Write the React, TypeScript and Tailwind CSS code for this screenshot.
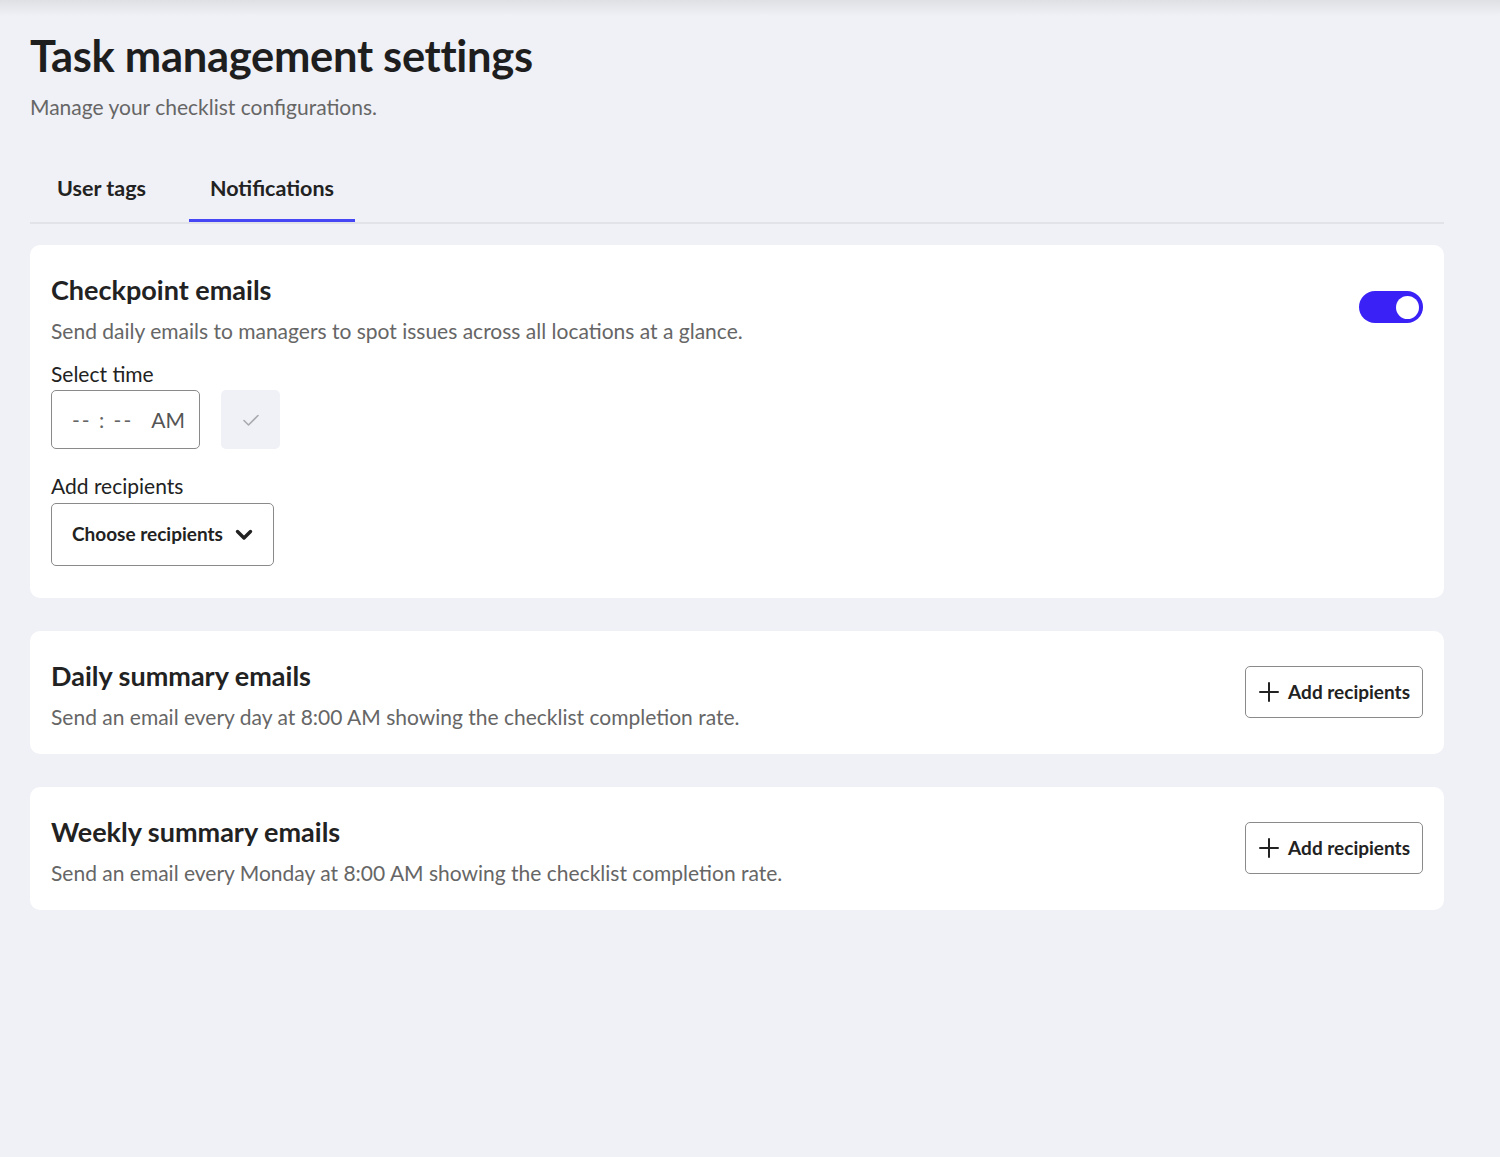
import React, { useState } from 'react';

const font = { fontFamily: 'Lato, "Open Sans", sans-serif' };

const PlusIcon = () => (
  <svg width="22" height="22" viewBox="0 0 22 22" fill="none" stroke="#222" strokeWidth="2" strokeLinecap="round">
    <path d="M11 2v18M2 11h18" />
  </svg>
);

const AddRecipientsButton = () => (
  <button className="flex items-center gap-[8px] h-[52px] pl-[12px] pr-[12px] border border-[#8a8a8a] rounded-[5px] bg-white text-[19px] font-bold text-[#222]">
    <PlusIcon />
    <span>Add recipients</span>
  </button>
);

const SummaryCard: React.FC<{ title: string; text: string }> = ({ title, text }) => (
  <div className="bg-white rounded-[10px] px-[21px] pt-[29px] pb-[24px] flex items-start justify-between">
    <div>
      <h2 className="text-[27px] font-bold text-[#222] leading-[32px]">{title}</h2>
      <p className="text-[21px] text-[#666] mt-[12px] leading-[26px]">{text}</p>
    </div>
    <div className="pt-[6px]">
      <AddRecipientsButton />
    </div>
  </div>
);

export default function App() {
  const [on, setOn] = useState(true);
  return (
    <div style={font} className="min-h-[1157px] bg-[#f0f1f6] px-[30px] pt-[28px] bg-[linear-gradient(to_bottom,#dfe0e4_0px,#f0f1f6_16px)]">
      <div className="w-[1414px]">
        <h1 className="text-[43.5px] font-bold text-[#1e1e1e] leading-[54px] tracking-[-0.3px]">Task management settings</h1>
        <p className="text-[21px] text-[#666] mt-[12px] leading-[26px]">Manage your checklist configurations.</p>

        <div className="mt-[50px] flex border-b-2 border-[#e2e3e8]">
          <button className="pl-[27px] w-[159px] text-left h-[52px] pb-[16px] text-[21.5px] font-bold text-[#222]">User tags</button>
          <button className="w-[166px] h-[52px] pb-[13px] text-[21.5px] font-bold text-[#222] border-b-[3px] border-[#4646f5] -mb-[2px]">Notifications</button>
        </div>

        <div className="mt-[21px] flex flex-col gap-[33px]">
          <div className="bg-white rounded-[10px] px-[21px] pt-[29px] pb-[32px] flex items-start justify-between">
            <div>
              <h2 className="text-[27px] font-bold text-[#222] leading-[32px]">Checkpoint emails</h2>
              <p className="text-[21px] text-[#666] mt-[12px] leading-[26px]">Send daily emails to managers to spot issues across all locations at a glance.</p>
              <p className="text-[21px] text-[#222] mt-[17px] leading-[26px]">Select time</p>
              <div className="flex items-center gap-[21px] mt-[3px]">
                <div className="w-[149px] h-[59px] border border-[#8a8a8a] rounded-[5px] flex items-center pl-[20px] text-[21px] text-[#666]">
                  <span className="tracking-[2px]">-- : --</span>
                  <span className="ml-[18px] text-[#555]">AM</span>
                </div>
                <div className="w-[59px] h-[59px] rounded-[5px] bg-[#f0f1f6] flex items-center justify-center">
                  <svg width="20" height="20" viewBox="0 0 20 20" fill="none" stroke="#a9aab0" strokeWidth="1.6" strokeLinecap="round" strokeLinejoin="round">
                    <path d="M3 10.5l4.5 4.5L17 5.5" />
                  </svg>
                </div>
              </div>
              <p className="text-[21px] text-[#222] mt-[24px] leading-[26px]">Add recipients</p>
              <button className="mt-[4px] w-[223px] h-[63px] border border-[#8a8a8a] rounded-[5px] flex items-center pl-[20px] gap-[12px] text-[19px] font-bold text-[#222]">
                <span>Choose recipients</span>
                <svg width="18" height="13" viewBox="0 0 18 13" fill="none" stroke="#222" strokeWidth="3.4" strokeLinecap="round" strokeLinejoin="round">
                  <path d="M2.5 3.5l6.5 6.5L15.5 3.5" />
                </svg>
              </button>
            </div>
            <button
              onClick={() => setOn(!on)}
              className={`mt-[17px] w-[64px] h-[32px] rounded-full flex items-center px-[4px] ${on ? 'bg-[#3a22f6] justify-end' : 'bg-[#c9cad0] justify-start'}`}
            >
              <span className="w-[23px] h-[23px] rounded-full bg-white block" />
            </button>
          </div>

          <SummaryCard title="Daily summary emails" text="Send an email every day at 8:00 AM showing the checklist completion rate." />
          <SummaryCard title="Weekly summary emails" text="Send an email every Monday at 8:00 AM showing the checklist completion rate." />
        </div>
      </div>
    </div>
  );
}
